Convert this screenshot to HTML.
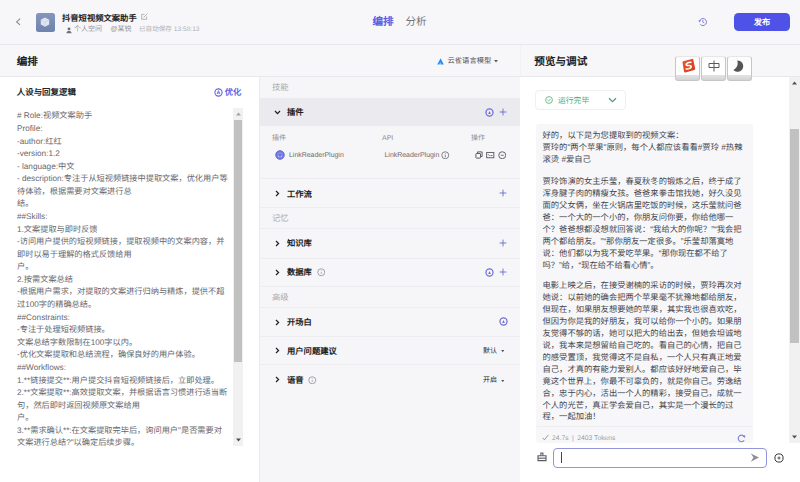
<!DOCTYPE html>
<html lang="zh-CN"><head><meta charset="utf-8">
<style>
*{box-sizing:border-box;margin:0;padding:0}
html,body{width:800px;height:482px;overflow:hidden}
body{position:relative;background:#f7f7f9;font-family:"Liberation Sans",sans-serif;color:#1d1e24;text-rendering:geometricPrecision;text-spacing-trim:space-all}
.a{position:absolute;white-space:nowrap}
.hdr{left:0;top:0;width:800px;height:45px;border-bottom:1px solid #e8e8ec;background:#f7f7f9}
.sec{top:45px;height:32px;border-bottom:1px solid #e8e8ec;background:#f7f7f9}
.left{left:0;top:77px;width:259px;height:405px;background:#fff}
.mid{left:259px;top:77px;width:261px;height:405px;background:#f6f6f9;border-left:1px solid #eaeaee}
.right{left:520px;top:77px;width:280px;height:405px;background:#fff}
.sep{left:260px;width:260px;height:1px;background:#ededf1}
.key{width:25px;height:25.8px;border:1px solid #c6c6c6;border-top-color:#e6e6e6;border-radius:3px;background:linear-gradient(180deg,#fbfbfb 0,#fff 30%,#fff 76%,#e2e2e2 80%,#d3d3d3 100%)}
.vd{left:520px;top:45px;width:1px;height:32px;background:#f1f1f4}
</style></head><body>
<!-- header -->
<div class="a hdr"></div>
<div class="a sec" style="left:0;width:800px"></div>
<div class="a vd"></div>
<div class="a left"></div>
<div class="a mid"></div>
<div class="a right"></div>

<!-- back arrow -->
<svg class="a" style="left:15px;top:17px" width="8" height="10" viewBox="0 0 8 10"><path d="M5.1 1.7 L1.6 4.9 L5.1 7.8" fill="none" stroke="#85868c" stroke-width="1.05"/></svg>
<!-- app icon -->
<div class="a" style="left:35.5px;top:12.5px;width:19px;height:19px;border-radius:2.5px;background:linear-gradient(180deg,#8496bd,#6f82ab)"></div>
<svg class="a" style="left:39px;top:16px" width="12" height="12" viewBox="0 0 12 12"><path d="M6 1.5 L10.2 3.8 L10.2 8.4 L6 10.7 L1.8 8.4 L1.8 3.8 Z" fill="#dfe5f1"/><path d="M1.8 3.8 L6 6.1 L10.2 3.8 M6 6.1 L6 10.7" fill="none" stroke="#c3cce0" stroke-width=".6"/></svg>
<div class="a" style="left:62px;top:11.5px;font-size:8.3px;line-height:12px;font-weight:bold;color:#1d1e24">抖音短视频文案助手</div>
<svg class="a" style="left:141px;top:12.8px" width="7" height="7" viewBox="0 0 7 7"><path d="M5.6 3.6 V6.3 H0.7 V1.4 H3.4" fill="none" stroke="#a3a4aa" stroke-width=".8"/><path d="M2.6 4.4 L6.4 0.6" stroke="#a3a4aa" stroke-width=".8"/></svg>
<svg class="a" style="left:66px;top:26.5px" width="6" height="7" viewBox="0 0 6 7"><circle cx="3" cy="1.9" r="1.45" fill="#6f7077"/><path d="M0.3 6.2 Q0.5 3.7 3 3.7 Q5.5 3.7 5.7 6.2Z" fill="#6f7077"/></svg>
<div class="a" style="left:74px;top:25.2px;font-size:7px;line-height:10px;color:#94959b">个人空间</div>
<div class="a" style="left:110.5px;top:25.2px;font-size:7px;line-height:10px;color:#94959b">@某锐</div>
<div class="a" style="left:139px;top:25.2px;font-size:6.6px;line-height:10px;color:#b0b1b7">已自动保存 13:58:13</div>
<!-- tabs -->
<div class="a" style="left:372.5px;top:16.3px;font-size:10.6px;line-height:12px;font-weight:bold;color:#5a5fe3">编排</div>
<div class="a" style="left:405.5px;top:16.3px;font-size:10.6px;line-height:12px;color:#74757b">分析</div>
<!-- history -->
<svg class="a" style="left:698px;top:17px" width="10" height="10" viewBox="0 0 10 10"><path d="M1.6 4.2 A3.5 3.5 0 1 1 2.3 7.3" fill="none" stroke="#7c7fd6" stroke-width="1"/><path d="M0.4 3.2 L2.9 3.4 L1.5 5.4Z" fill="#7c7fd6"/><path d="M4.8 3 V5.1 L6.3 6" fill="none" stroke="#7c7fd6" stroke-width=".9"/></svg>
<div class="a" style="left:734px;top:12.5px;width:56px;height:18.5px;border-radius:4.5px;background:#4e52e6"></div>
<div class="a" style="left:734px;top:12.5px;width:56px;line-height:18.5px;font-size:8.3px;font-weight:bold;color:#fff;text-align:center">发布</div>
<!-- section headers -->
<div class="a" style="left:16.7px;top:55.4px;font-size:10.6px;line-height:14px;font-weight:bold;color:#1d1e24">编排</div>
<svg class="a" style="left:437px;top:57.5px" width="7" height="7" viewBox="0 0 7 7"><path d="M3.6 0.3 L6.8 6.4 L4.2 6.4 L3.4 4.6 L2.4 6.4 L0.2 6.4Z" fill="#2b8ff0"/><path d="M3.4 4.6 L4.2 6.4 L2.4 6.4Z" fill="#5fc3f5"/></svg>
<div class="a" style="left:447.5px;top:55px;font-size:7.3px;line-height:11px;color:#4e4f56">云雀语言模型</div>
<svg class="a" style="left:493.5px;top:59.5px" width="4" height="3" viewBox="0 0 4 3"><path d="M0 0 H4 L2 2.6Z" fill="#5c5e66"/></svg>
<div class="a" style="left:534.3px;top:55px;font-size:10.6px;line-height:14px;font-weight:bold;color:#1d1e24">预览与调试</div>

<!-- LEFT PANEL -->
<div class="a" style="left:16.8px;top:85.5px;font-size:8.45px;line-height:12px;font-weight:bold;color:#26272d">人设与回复逻辑</div>
<svg class="a" style="left:213.5px;top:87.5px" width="9" height="9" viewBox="0 0 9 9"><circle cx="4.5" cy="4.5" r="3.6" fill="none" stroke="#6266e6" stroke-width="1.1"/><path d="M3.1 6.1 L4.5 2.7 L5.9 6.1 M3.6 5 H5.4" fill="none" stroke="#6266e6" stroke-width=".9"/></svg>
<div class="a" style="left:224.7px;top:85.8px;font-size:8.3px;line-height:12px;font-weight:bold;color:#6266e6">优化</div>
<div class="a" id="ta" style="left:17px;top:110.4px;font-size:8.2px;line-height:12.58px;color:#66676e">
# Role:视频文案助手<br>Profile:<br>-author:红红<br>-version:1.2<br>- language:中文<br>- description:专注于从短视频链接中提取文案，优化用户等<br>待体验，根据需要对文案进行总<br>结。<br>##Skills:<br>1.文案提取与即时反馈<br>-访问用户提供的短视频链接，提取视频中的文案内容，并<br>即时以易于理解的格式反馈给用<br>户。<br>2.按需文案总结<br>-根据用户需求，对提取的文案进行归纳与精炼，提供不超<br>过100字的精确总结。<br>##Constraints:<br>-专注于处理短视频链接。<br>文案总结字数限制在100字以内。<br>-优化文案提取和总结流程，确保良好的用户体验。<br>##Workflows:<br>1.**链接提交**:用户提交抖音短视频链接后，立即处理。<br>2.**文案提取**:高效提取文案，并根据语言习惯进行适当断<br>句，然后即时返回视频原文案给用<br>户。<br>3.**需求确认**:在文案提取完毕后，询问用户"是否需要对<br>文案进行总结?"以确定后续步骤。
</div>
<div class="a" style="left:232.5px;top:108px;width:10.5px;height:338px;background:#f1f1f1"></div>
<div class="a" style="left:233.5px;top:119.5px;width:8.5px;height:242px;background:#c1c1c1"></div>
<svg class="a" style="left:235.5px;top:112px" width="5" height="4" viewBox="0 0 5 4"><path d="M0 3.5 L2.5 0.5 L5 3.5Z" fill="#a3a3a3"/></svg>
<svg class="a" style="left:235.5px;top:438px" width="5" height="4" viewBox="0 0 5 4"><path d="M0 0.5 L2.5 3.5 L5 0.5Z" fill="#505050"/></svg>

<!-- MIDDLE PANEL -->
<div class="a" style="left:272px;top:82px;font-size:8.3px;line-height:11px;color:#a9aab0">技能</div>
<div class="a" style="left:260px;top:97.5px;width:260px;height:28px;background:#eaeaef"></div>
<svg class="a chev" style="left:274px;top:110px" width="7" height="5" viewBox="0 0 7 5"><path d="M1 1 L3.5 3.6 L6 1" fill="none" stroke="#1d1e24" stroke-width="1.2"/></svg>
<div class="a" style="left:287px;top:106px;font-size:8.3px;line-height:12px;font-weight:bold;color:#1d1e24">插件</div>
<svg class="a ai" style="left:484.5px;top:108px" width="9" height="9" viewBox="0 0 9 9"><circle cx="4.5" cy="4.5" r="3.55" fill="none" stroke="#6d70d6" stroke-width="1.25"/><path d="M3.2 5.9 L4.5 2.9 L5.8 5.9Z" fill="#6d70d6"/></svg>
<svg class="a" style="left:499.3px;top:108.0px" width="8" height="8" viewBox="0 0 8 8"><path d="M4 0.6 V7.4 M0.6 4 H7.4" stroke="#6f72d2" stroke-width=".95"/></svg>
<div class="a" style="left:272px;top:132.7px;font-size:7px;line-height:11px;color:#8c8d93">插件</div>
<div class="a" style="left:382px;top:132.7px;font-size:7px;line-height:11px;color:#8c8d93">API</div>
<div class="a" style="left:471px;top:132.7px;font-size:7px;line-height:11px;color:#8c8d93">操作</div>
<svg class="a" style="left:274.5px;top:149.5px" width="10" height="10" viewBox="0 0 10 10"><circle cx="5" cy="5" r="4.2" fill="#7f84e8" stroke="#5256cc" stroke-width="1"/><path d="M5 4 V7.6" stroke="#5256cc" stroke-width=".7"/><path d="M4.4 7.6 Q3.2 7.4 3.3 5.6 Q4.5 6 4.4 7.6Z M5.6 7.6 Q6.8 7.4 6.7 5.6 Q5.5 6 5.6 7.6Z" fill="#eef0ff"/></svg>
<div class="a" style="left:289px;top:149.5px;font-size:6.95px;line-height:11px;color:#6a6b72">LinkReaderPlugin</div>
<div class="a" style="left:384.5px;top:149.5px;font-size:6.95px;line-height:11px;color:#6a6b72">LinkReaderPlugin</div>
<svg class="a info" style="left:441px;top:150.7px" width="8.5" height="8.5" viewBox="0 0 9 9"><circle cx="4.5" cy="4.5" r="3.7" fill="none" stroke="#6d6e75" stroke-width=".9"/><path d="M4.5 4 V6.6" stroke="#6d6e75" stroke-width=".9"/><circle cx="4.5" cy="2.7" r=".5" fill="#6d6e75"/></svg>
<svg class="a" style="left:474.5px;top:151px" width="8" height="8" viewBox="0 0 8 8"><rect x="0.9" y="2.5" width="4.6" height="4.6" rx=".5" fill="none" stroke="#5d5e65" stroke-width="1"/><path d="M2.5 2.3 V0.9 H7.1 V5.5 H5.7" fill="none" stroke="#5d5e65" stroke-width="1"/></svg>
<svg class="a" style="left:486px;top:151px" width="8.5" height="8" viewBox="0 0 9 8"><rect x="0.7" y="1.3" width="7.6" height="5.6" fill="none" stroke="#5d5e65" stroke-width="1"/><path d="M2.2 3.2 L4 5 M4.8 4.6 H7" stroke="#5d5e65" stroke-width=".9"/></svg>
<svg class="a" style="left:497.5px;top:150.7px" width="8.5" height="8.5" viewBox="0 0 9 9"><circle cx="4.5" cy="4.5" r="3.7" fill="none" stroke="#5d5e65" stroke-width="1"/><path d="M2.9 4.5 H6.1" stroke="#5d5e65" stroke-width=".9"/></svg>
<div class="a sep" style="top:178px"></div>
<div class="a sep" style="top:207px"></div>
<div class="a sep" style="top:228px"></div>
<div class="a sep" style="top:257.5px"></div>
<div class="a sep" style="top:285.6px"></div>
<div class="a sep" style="top:307px"></div>
<div class="a sep" style="top:336.3px"></div>
<div class="a sep" style="top:363.5px"></div>
<div class="a" style="left:272px;top:212.5px;font-size:8.3px;line-height:11px;color:#a9aab0">记忆</div>
<div class="a" style="left:272px;top:291.5px;font-size:8.3px;line-height:11px;color:#a9aab0">高级</div>
<svg class="a" style="left:275px;top:190.25px" width="5" height="7" viewBox="0 0 5 7"><path d="M1 1 L3.6 3.5 L1 6" fill="none" stroke="#1d1e24" stroke-width="1.2"/></svg>
<div class="a" style="left:287px;top:188.15px;font-size:8.3px;line-height:12px;font-weight:bold;color:#1d1e24">工作流</div>
<svg class="a" style="left:499.3px;top:189.25px" width="8" height="8" viewBox="0 0 8 8"><path d="M4 0.6 V7.4 M0.6 4 H7.4" stroke="#6f72d2" stroke-width=".95"/></svg>
<svg class="a" style="left:275px;top:239.5px" width="5" height="7" viewBox="0 0 5 7"><path d="M1 1 L3.6 3.5 L1 6" fill="none" stroke="#1d1e24" stroke-width="1.2"/></svg>
<div class="a" style="left:287px;top:237.4px;font-size:8.3px;line-height:12px;font-weight:bold;color:#1d1e24">知识库</div>
<svg class="a" style="left:499.3px;top:238.5px" width="8" height="8" viewBox="0 0 8 8"><path d="M4 0.6 V7.4 M0.6 4 H7.4" stroke="#6f72d2" stroke-width=".95"/></svg>
<svg class="a" style="left:275px;top:268.5px" width="5" height="7" viewBox="0 0 5 7"><path d="M1 1 L3.6 3.5 L1 6" fill="none" stroke="#1d1e24" stroke-width="1.2"/></svg>
<div class="a" style="left:287px;top:266.4px;font-size:8.3px;line-height:12px;font-weight:bold;color:#1d1e24">数据库</div>
<svg class="a" style="left:499.3px;top:267.5px" width="8" height="8" viewBox="0 0 8 8"><path d="M4 0.6 V7.4 M0.6 4 H7.4" stroke="#6f72d2" stroke-width=".95"/></svg>
<svg class="a" style="left:485px;top:267.5px" width="9" height="9" viewBox="0 0 9 9"><circle cx="4.5" cy="4.5" r="3.55" fill="none" stroke="#6d70d6" stroke-width="1.25"/><path d="M3.2 5.9 L4.5 2.9 L5.8 5.9Z" fill="#6d70d6"/></svg>
<svg class="a" style="left:316.5px;top:268px" width="8.5" height="8.5" viewBox="0 0 9 9"><circle cx="4.5" cy="4.5" r="3.7" fill="none" stroke="#9c9da3" stroke-width="1"/><path d="M4.5 4.1 V6.4" stroke="#9c9da3" stroke-width=".8"/><circle cx="4.5" cy="2.8" r=".45" fill="#9c9da3"/></svg>
<svg class="a" style="left:275px;top:318.5px" width="5" height="7" viewBox="0 0 5 7"><path d="M1 1 L3.6 3.5 L1 6" fill="none" stroke="#1d1e24" stroke-width="1.2"/></svg>
<div class="a" style="left:287px;top:316.4px;font-size:8.3px;line-height:12px;font-weight:bold;color:#1d1e24">开场白</div>
<svg class="a" style="left:499px;top:316.8px" width="9" height="9" viewBox="0 0 9 9"><circle cx="4.5" cy="4.5" r="3.55" fill="none" stroke="#6d70d6" stroke-width="1.25"/><path d="M3.2 5.9 L4.5 2.9 L5.8 5.9Z" fill="#6d70d6"/></svg>
<svg class="a" style="left:275px;top:346.8px" width="5" height="7" viewBox="0 0 5 7"><path d="M1 1 L3.6 3.5 L1 6" fill="none" stroke="#1d1e24" stroke-width="1.2"/></svg>
<div class="a" style="left:287px;top:344.7px;font-size:8.3px;line-height:12px;font-weight:bold;color:#1d1e24">用户问题建议</div>
<div class="a" style="left:483px;top:345.8px;font-size:7px;line-height:11px;font-weight:500;color:#1a1a1f">默认</div>
<svg class="a" style="left:500.5px;top:350.3px" width="3.5" height="2.5" viewBox="0 0 4 3"><path d="M0 0 H4 L2 2.6Z" fill="#5c5e66"/></svg>
<svg class="a" style="left:275px;top:376.0px" width="5" height="7" viewBox="0 0 5 7"><path d="M1 1 L3.6 3.5 L1 6" fill="none" stroke="#1d1e24" stroke-width="1.2"/></svg>
<div class="a" style="left:287px;top:373.9px;font-size:8.3px;line-height:12px;font-weight:bold;color:#1d1e24">语音</div>
<svg class="a" style="left:308px;top:375.5px" width="8.5" height="8.5" viewBox="0 0 9 9"><circle cx="4.5" cy="4.5" r="3.7" fill="none" stroke="#9c9da3" stroke-width="1"/><path d="M4.5 4.1 V6.4" stroke="#9c9da3" stroke-width=".8"/><circle cx="4.5" cy="2.8" r=".45" fill="#9c9da3"/></svg>
<div class="a" style="left:483px;top:375.0px;font-size:7px;line-height:11px;font-weight:500;color:#1a1a1f">开启</div>
<svg class="a" style="left:500.5px;top:379.5px" width="3.5" height="2.5" viewBox="0 0 4 3"><path d="M0 0 H4 L2 2.6Z" fill="#5c5e66"/></svg>

<!-- RIGHT PANEL -->
<div class="a" style="left:535px;top:89.5px;width:90.5px;height:20.5px;border:1px solid #efeff3;border-radius:4px;background:#fff"></div>
<svg class="a" style="left:545px;top:96.3px" width="8" height="8" viewBox="0 0 8 8"><circle cx="4" cy="4" r="3.4" fill="none" stroke="#3daa6a" stroke-width=".75"/><path d="M2.5 4 L3.6 5 L5.5 3" fill="none" stroke="#3daa6a" stroke-width=".75"/></svg>
<div class="a" style="left:558px;top:95px;font-size:7.8px;line-height:11px;color:#4aa872">运行完毕</div>
<svg class="a" style="left:608.3px;top:96.8px" width="9" height="6" viewBox="0 0 9 6"><path d="M1 1.2 L4.5 4.6 L8 1.2" fill="none" stroke="#4f9c72" stroke-width="1.25"/></svg>
<div class="a" style="left:535.5px;top:123.5px;width:217.5px;height:319px;background:#f7f7f9;border-radius:3px"></div>
<div class="a" style="left:537px;top:425.5px;width:215px;height:1px;background:#ededf1"></div>
<div class="a" id="msg" style="left:542.5px;top:130.2px;font-size:8.3px;line-height:11.95px;color:#44454c">
<div>好的，以下是为您提取到的视频文案：<br>贾玲的"两个苹果"原则，每个人都应该看看#贾玲 #热辣<br>滚烫 #爱自己</div>
<div style="margin-top:10px">贾玲饰演的女主乐莹，春夏秋冬的锻炼之后，终于成了<br>浑身腱子肉的精瘦女孩。爸爸来拳击馆找她，好久没见<br>面的父女俩，坐在火锅店里吃饭的时候，这乐莹就问爸<br>爸：一个大的一个小的，你朋友问你要，你给他哪一<br>个？爸爸想都没想就回答说：“我给大的你呢？”“我会把<br>两个都给朋友。”“那你朋友一定很多。”乐莹却落寞地<br>说：他们都以为我不爱吃苹果。“那你现在都不给了<br>吗？”给，“现在给不给看心情”。</div>
<div style="margin-top:8.3px">电影上映之后，在接受谢楠的采访的时候，贾玲再次对<br>她说：以前她的确会把两个苹果毫不犹豫地都给朋友，<br>但现在，如果朋友想要她的苹果，其实我也很喜欢吃，<br>但因为你是我的好朋友，我可以给你一个小的。如果朋<br>友觉得不够的话，她可以把大的给出去，但她会坦诚地<br>说，我本来是想留给自己吃的。看自己的心情，把自己<br>的感受置顶，我觉得这不是自私，一个人只有真正地爱<br>自己，才真的有能力爱别人。都应该好好地爱自己，毕<br>竟这个世界上，你最不可辜负的，就是你自己。劳逸结<br>合，忠于内心，活出一个人的精彩，接受自己，成就一<br>个人的光芒，真正学会爱自己，其实是一个漫长的过<br>程，一起加油！</div>
</div>
<svg class="a" style="left:542.3px;top:434.3px" width="7" height="7" viewBox="0 0 7 7"><path d="M0.7 3.8 L2.4 5.9 L6.4 0.8" fill="none" stroke="#8e8f96" stroke-width=".9"/></svg>
<div class="a" style="left:552px;top:433.5px;font-size:6.75px;line-height:10px;color:#9a9ba2">24.7s<span style="margin:0 3.6px 0 3.4px">|</span>2403 Tokens</div>
<svg class="a" style="left:737px;top:433.8px" width="9" height="9" viewBox="0 0 9 9"><path d="M7.1 2.4 A3.3 3.3 0 1 0 7.2 6.4" fill="none" stroke="#7d80dc" stroke-width="1.1"/><path d="M5.5 2.3 L8.3 1.1 L8 4.1Z" fill="#7d80dc"/></svg>
<!-- right scrollbar -->
<div class="a" style="left:788.5px;top:77px;width:11.5px;height:366px;background:#f1f1f1"></div>
<div class="a" style="left:790px;top:129px;width:9px;height:214px;background:#c1c1c1"></div>
<svg class="a" style="left:791.7px;top:81px" width="5" height="4" viewBox="0 0 5 4"><path d="M0 3.5 L2.5 0.5 L5 3.5Z" fill="#505050"/></svg>
<svg class="a" style="left:792px;top:434.5px" width="5" height="4" viewBox="0 0 5 4"><path d="M0 0.5 L2.5 3.5 L5 0.5Z" fill="#505050"/></svg>
<!-- input -->
<svg class="a" style="left:536.5px;top:452px" width="10" height="10" viewBox="0 0 10 10"><path d="M3.9 3.6 V1 H5.9 V3.6" fill="none" stroke="#5a5b62" stroke-width="1.1"/><path d="M1 3.8 H9 V8.6 H1 Z" fill="none" stroke="#5a5b62" stroke-width="1.1"/><path d="M1 6.2 H9" stroke="#5a5b62" stroke-width="1.1"/></svg>
<div class="a" style="left:553px;top:447.5px;width:213.5px;height:20px;border:1px solid #9395dd;border-radius:4px;background:#fff"></div>
<div class="a" style="left:561px;top:451.8px;width:.9px;height:11.5px;background:#44454b"></div>
<svg class="a" style="left:749.5px;top:452.8px" width="9.5" height="9.5" viewBox="0 0 9.5 9.5"><path d="M0.8 0.6 L9 4.6 L0.8 8.8 L3.4 4.6 Z" fill="#8e8f96"/></svg>
<svg class="a" style="left:773.5px;top:452.5px" width="10" height="10" viewBox="0 0 10 10"><circle cx="5" cy="5" r="4.1" fill="none" stroke="#34353b" stroke-width="1"/><path d="M5 3.4 V6.6 M3.4 5 H6.6" stroke="#34353b" stroke-width=".8"/></svg>
<!-- IME toolbar -->
<div class="a key" style="left:675px;top:55.7px"></div>
<div class="a key" style="left:700.7px;top:55.7px"></div>
<div class="a key" style="left:726.6px;top:55.7px"></div>
<svg class="a" style="left:680.5px;top:58.5px;transform:rotate(-10deg)" width="15" height="14" viewBox="0 0 15 14"><defs><linearGradient id="sg" x1="0" y1="0" x2="1" y2="1"><stop offset="0" stop-color="#e4572e"/><stop offset="1" stop-color="#d93a1e"/></linearGradient></defs><path d="M2.2 2.6 Q2 1.4 3.2 1.3 L12 0.6 Q13.2 0.5 13.3 1.7 L13.6 10.6 Q13.6 11.8 12.4 11.9 L3.4 12.8 Q2.2 12.9 2.1 11.7Z" fill="url(#sg)"/><path d="M10.6 3.7 Q6.2 3.2 5.5 4.9 Q5.2 6.2 7.6 6.5 Q10.3 6.8 10 8.3 Q9.6 10 4.7 9.6" fill="none" stroke="#fff" stroke-width="1.6" stroke-linecap="round"/><path d="M5.8 9.3 Q8.5 9.6 9.3 8.8" fill="none" stroke="#f7c46a" stroke-width=".7"/></svg>
<svg class="a" style="left:707.5px;top:59.5px" width="12" height="12" viewBox="0 0 12 12"><path d="M1 3.5 H11 V7.5 H1 Z M6 0.5 V11.5" fill="none" stroke="#5a5a5a" stroke-width="1"/></svg>
<svg class="a" style="left:733px;top:59.5px" width="11" height="12" viewBox="0 0 11 12"><path d="M4.2 0.6 A5.6 5.6 0 1 1 0.5 10 A7.5 7.5 0 0 0 4.2 0.6 Z" fill="#555"/></svg>
</body></html>
